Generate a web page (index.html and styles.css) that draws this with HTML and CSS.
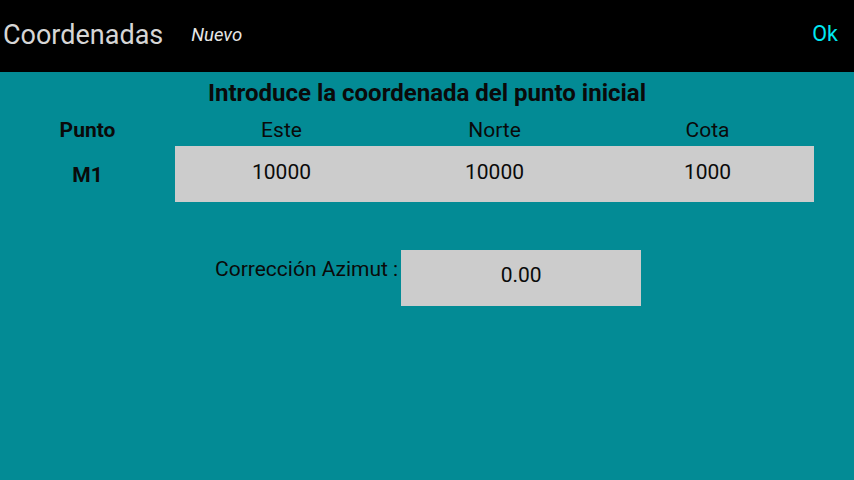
FILE: index.html
```html
<!DOCTYPE html>
<html>
<head>
<meta charset="utf-8">
<link rel="stylesheet" href="styles.css">
</head>
<body>
<div class="app">
  <header class="bar">
    <span class="title">Coordenadas</span>
    <span class="nuevo">Nuevo</span>
    <span class="spacer"></span>
    <span class="ok">Ok</span>
  </header>
  <main class="content">
    <h1 class="heading">Introduce la coordenada del punto inicial</h1>
    <div class="grid">
      <div class="hdr bold">Punto</div>
      <div class="hdr">Este</div>
      <div class="hdr">Norte</div>
      <div class="hdr">Cota</div>
    </div>
    <div class="grid row">
      <div class="cell bold m1">M1</div>
      <div class="values">
        <div class="val">10000</div>
        <div class="val">10000</div>
        <div class="val">1000</div>
      </div>
    </div>
    <div class="azimut">
      <span class="az-label">Corrección Azimut :</span>
      <div class="az-box">0.00</div>
    </div>
  </main>
</div>
</body>
</html>
```
FILE: styles.css
```css
html, body {
  margin: 0;
  padding: 0;
}
body {
  width: 854px;
  height: 480px;
  overflow: hidden;
  font-family: Roboto, "Liberation Sans", sans-serif;
  background: #038b95;
}
.app {
  display: flex;
  flex-direction: column;
  height: 480px;
}
.bar {
  height: 72px;
  background: #000;
  display: flex;
  align-items: flex-start;
  padding: 0 16px 0 3px;
  box-sizing: border-box;
}
.title {
  font-size: 27px;
  line-height: 1.172;
  color: #d6d6d6;
  margin-top: 20px;
}
.nuevo {
  font-size: 18.5px;
  line-height: 1.172;
  font-style: italic;
  color: #e6e6e6;
  margin-left: 28px;
  margin-top: 25px;
}
.spacer { flex: 1; }
.ok {
  font-size: 21.5px;
  line-height: 1.172;
  color: #00e8f2;
  margin-top: 21px;
}
.content {
  flex: 1;
  color: #0a0a0a;
}
.heading {
  margin: 7px 0 0 0;
  font-size: 24px;
  font-weight: bold;
  text-align: center;
  line-height: 28px;
}
.grid {
  display: grid;
  grid-template-columns: 175px 213px 213px 213px;
}
.hdr {
  text-align: center;
  font-size: 21px;
  line-height: 25px;
  margin-top: 11px;
}
.bold { font-weight: bold; }
.row {
  grid-template-columns: 175px 639px;
  margin-top: 3px;
}
.m1 {
  font-size: 21px;
  line-height: 25px;
  display: flex;
  align-items: center;
  justify-content: center;
  padding-top: 3px;
}
.values {
  background: #cccccc;
  height: 56px;
  display: grid;
  grid-template-columns: 1fr 1fr 1fr;
}
.val {
  font-size: 21px;
  line-height: 25px;
  text-align: center;
  padding-top: 14px;
}
.azimut {
  display: flex;
  margin-top: 48px;
  padding-left: 215px;
}
.az-label {
  font-size: 21px;
  line-height: 25px;
  padding-top: 7px;
  margin-right: 3px;
}
.az-box {
  width: 240px;
  height: 56px;
  background: #cccccc;
  font-size: 21px;
  line-height: 25px;
  text-align: center;
  box-sizing: border-box;
  padding-top: 13px;
}
```
